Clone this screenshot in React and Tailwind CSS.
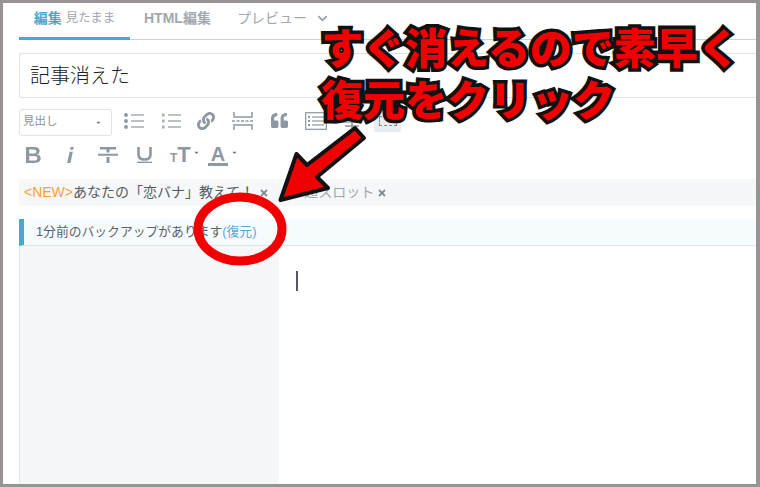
import React from "react";
import { FaLink, FaQuoteLeft, FaChevronDown, FaTimes, FaCaretDown } from "react-icons/fa";

const jp = "font-['Liberation_Sans','Noto_Sans_CJK_JP',sans-serif]";

function Bullets({ ordered }) {
  return (
    <svg width="20" height="16" viewBox="0 0 20 16" className="text-[#8d98a2]">
      {[2, 8, 14].map((y) => (
        <g key={y}>
          {ordered ? (
            <rect x="1" y={y - 1.5} width="2.6" height="3" fill="currentColor" opacity="0.75" />
          ) : (
            <circle cx="2" cy={y} r="1.9" fill="currentColor" />
          )}
          <rect x="7" y={y - 0.7} width="13" height="1.4" fill="currentColor" opacity="0.85" />
        </g>
      ))}
    </svg>
  );
}

function PageBreak() {
  return (
    <svg width="22" height="18" viewBox="0 0 22 18" className="text-[#8d98a2]">
      <path d="M2 0v5h18V0M2 18v-5h18v5" fill="none" stroke="currentColor" strokeWidth="1.5" />
      <path d="M0 9h22" stroke="currentColor" strokeWidth="1.6" strokeDasharray="3 1.5" />
    </svg>
  );
}

function ListBox() {
  return (
    <svg width="22" height="18" viewBox="0 0 22 18" className="text-[#8d98a2]">
      <rect x="0.7" y="0.7" width="20.6" height="16.6" fill="none" stroke="currentColor" strokeWidth="1.2" />
      {[5, 9, 13].map((y) => (
        <g key={y}>
          <rect x="3" y={y - 1} width="2" height="2" fill="currentColor" />
          <rect x="7" y={y - 0.6} width="12" height="1.2" fill="currentColor" />
        </g>
      ))}
    </svg>
  );
}

function AlignIcon() {
  return (
    <svg width="20" height="16" viewBox="0 0 20 16" className="text-[#8d98a2]">
      <path d="M0 9h20M3 13h14" stroke="currentColor" strokeWidth="1.4" />
      <path d="M10 5v10" stroke="currentColor" strokeWidth="1.6" />
    </svg>
  );
}

function BoldIcon() {
  return (
    <svg width="15" height="16" viewBox="0 0 15 16" className="text-[#8d98a2]">
      <path
        fillRule="evenodd"
        d="M0 0h8c3.4 0 5.6 1.5 5.6 4.1 0 1.7-1 3-2.6 3.5 2.3.4 3.7 1.9 3.7 4 0 2.8-2.4 4.4-6 4.4H0zM3.2 2.5v4.1h4.3c1.7 0 2.8-.8 2.8-2.1S9.2 2.5 7.5 2.5zM3.2 9v4.5h5c1.9 0 3.1-.8 3.1-2.3S10.100 9 8.200 9z"
        fill="currentColor"
      />
    </svg>
  );
}

function ItalicIcon() {
  return (
    <svg width="8" height="16" viewBox="0 0 8 16" className="text-[#8d98a2]">
      <path d="M4.600 0h3.200l-.6 2.800H4zM3.600 4.800h3.200L4.400 16H1.200z" fill="currentColor" />
    </svg>
  );
}

function StrikeIcon() {
  return (
    <svg width="20" height="16" viewBox="0 0 20 16" className="text-[#8d98a2]">
      <path d="M2 0h16v2.600H2zM8.500 2.600h3v3h-3zM8.500 10h3v6h-3zM0 6.700h20v2H0z" fill="currentColor" />
    </svg>
  );
}

function UnderlineIcon() {
  return (
    <svg width="15" height="16" viewBox="0 0 15 16" className="text-[#8d98a2]">
      <path d="M1.500 0v7.500c0 3.300 2.300 5 6 5s6-1.700 6-5V0" fill="none" stroke="currentColor" strokeWidth="2.600" />
      <path d="M0 14.600h15V16H0z" fill="currentColor" />
    </svg>
  );
}

function Tiny({ className = "" }) {
  return <FaCaretDown className={`text-[7px] text-[#6f7a84] ${className}`} />;
}

export default function App() {
  return (
    <div className={`relative h-[487px] w-[760px] overflow-hidden border-t-[3px] border-r-[4px] border-b-[3px] border-l-[3px] border-[#989394] bg-white ${jp}`}>
      <div className="flex h-full flex-col pl-[16px]">
        {/* tabs */}
        <div className="flex h-[37px] shrink-0 items-stretch border-b border-[#c9d0d6]">
          <div className="-mb-px flex w-[111px] items-center justify-center gap-[4px] border-b-[3px] border-[#45a9d0] pb-[4px]">
            <span className="text-[14px] font-bold text-[#4fa6cb]">編集</span>
            <span className="text-[12.5px] text-[#a1a8ae]">見たまま</span>
          </div>
          <div className="ml-[14px] flex items-center pb-[5px] text-[14px] font-bold text-[#a1a8ae]">HTML編集</div>
          <div className="ml-[26px] flex items-center gap-[10px] pb-[5px] text-[14px] text-[#a1a8ae]">
            プレビュー
            <FaChevronDown className="text-[11px] text-[#9aa3ab]" />
          </div>
        </div>

        {/* title */}
        <div className="mt-[13px] flex h-[45px] shrink-0 items-center rounded-l-[3px] border border-r-0 border-[#dfe3e6] pl-[10px] text-[20px] font-light text-[#222]">
          記事消えた
        </div>

        {/* toolbar row 1 */}
        <div className="mt-[10px] flex h-[28px] shrink-0 items-center">
          <div className="flex h-[27px] w-[93px] items-center justify-between rounded-[3px] border border-[#dfe3e6] pl-[3px] pr-[9px] text-[11.5px] text-[#8b9196]">
            見出し
            <Tiny />
          </div>
          <div className="ml-[12px] flex items-center pb-[3px]">
            <Bullets />
            <div className="ml-[17px]"><Bullets ordered /></div>
            <FaLink className="ml-[16px] text-[18px] text-[#8d98a2]" />
            <div className="ml-[17px]"><PageBreak /></div>
            <FaQuoteLeft className="ml-[17px] text-[17px] text-[#8d98a2]" />
            <div className="ml-[17px]"><ListBox /></div>
            <div className="ml-[15px]"><AlignIcon /></div>
            <div className="ml-[12px] flex h-[22px] w-[27px] items-center justify-center rounded-[2px] bg-[#e9edf0]">
              <div className="h-[10px] w-[18px] border border-dashed border-[#7d8892]" />
            </div>
          </div>
        </div>

        {/* toolbar row 2 */}
        <div className="mt-[5px] flex h-[28px] shrink-0 items-center pl-[7px]">
          <BoldIcon />
          <div className="ml-[25px]"><ItalicIcon /></div>
          <div className="ml-[24px]"><StrikeIcon /></div>
          <div className="ml-[19px]"><UnderlineIcon /></div>
          <span className="ml-[18px] flex items-baseline font-bold leading-none text-[#8d98a2]">
            <span className="text-[12px]">T</span>
            <span className="text-[22px]">T</span>
          </span>
          <Tiny className="mb-[6px] ml-[2px]" />
          <span className="ml-[8px] flex flex-col items-center border-b-[3px] border-[#8d98a2] px-[3px] text-[20px] font-bold leading-[18px] text-[#8d98a2]">A</span>
          <Tiny className="mb-[6px] ml-[3px]" />
        </div>

        {/* tags */}
        <div className="mt-[10px] flex h-[27px] shrink-0 items-center bg-[#f6f7f8] pl-[5px] text-[14px]">
          <span className="text-[#f5a332]">&lt;NEW&gt;</span>
          <span className="text-[#54595e]">あなたの「恋バナ」教えて！</span>
          <FaTimes className="ml-[5px] text-[10px] text-[#7d8790]" />
          <span className="ml-[35px] text-[#a1a8ae]">超スロット</span>
          <FaTimes className="ml-[3px] text-[10px] text-[#7d8790]" />
        </div>

        {/* notice */}
        <div className="mt-[13px] flex h-[27px] shrink-0 items-center border-b border-[#e3e7ea] border-l-[5px] border-l-[#45a9d0] bg-[#f6fbfd] pl-[12px] text-[12.8px] text-[#5b6066]">
          1分前のバックアップがあります
          <span className="text-[#5aa7cc]">(復元)</span>
        </div>

        {/* editor */}
        <div className="flex min-h-0 flex-1">
          <div className="w-[260px] border-l border-[#e3e6e9] bg-[#f6f7f9]" />
          <div className="flex-1 pl-[17px] pt-[25px]">
            <div className="h-[20px] w-[2px] bg-[#55595e]" />
          </div>
        </div>
      </div>

      {/* annotation overlays */}
      <div className="absolute left-[318px] top-[17px] whitespace-nowrap font-['Noto_Sans_CJK_JP',sans-serif] text-[42px] font-black leading-[52px] text-[#f00000] [-webkit-text-stroke:7px_#111] [paint-order:stroke_fill]">
        <div>すぐ消えるので素早く</div>
        <div>復元をクリック</div>
      </div>
      <svg className="absolute left-[271px] top-[120px]" width="100" height="85" viewBox="0 0 100 85">
        <path
          d="M6.5 77 L22.5 31 L33 42 L81 5 L90 15 L43 54 L54 65 Z"
          fill="#f00000"
          stroke="#111"
          strokeWidth="4"
          strokeLinejoin="round"
        />
      </svg>
      <svg className="absolute left-[187px] top-[188px]" width="100" height="80" viewBox="0 0 100 80">
        <ellipse cx="50" cy="38" rx="42" ry="32" fill="none" stroke="#f00000" strokeWidth="9" />
      </svg>
    </div>
  );
}
